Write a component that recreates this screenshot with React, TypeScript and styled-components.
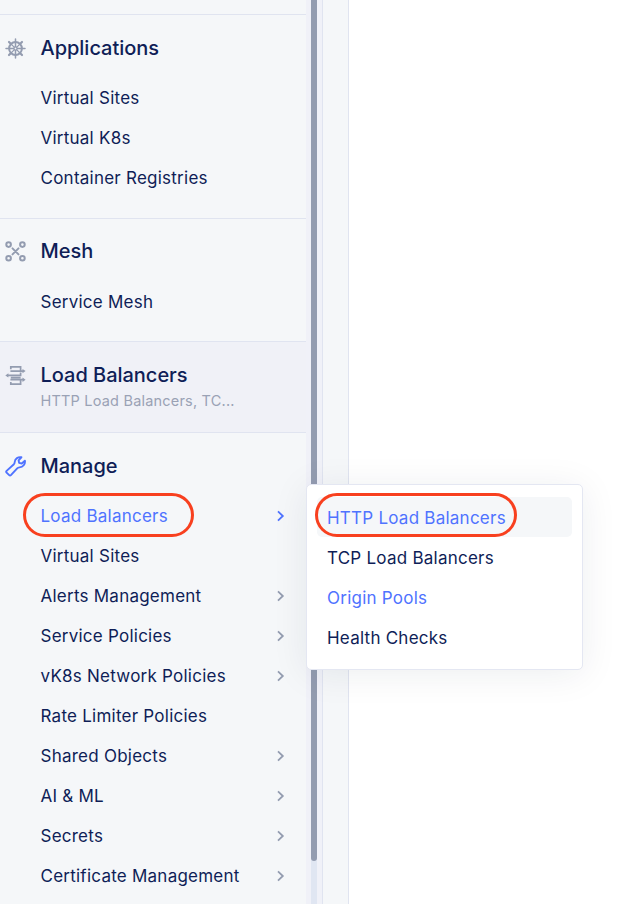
import React from "react";
import styled, { createGlobalStyle } from "styled-components";

const GlobalStyle = createGlobalStyle`
  * { box-sizing: border-box; }
  body {
    margin: 0;
    background: #fff;
    font-family: Inter, "Liberation Sans", sans-serif;
    color: #0f1e57;
  }
`;

const Page = styled.div`
  position: relative;
  display: flex;
  width: 620px;
  height: 904px;
  overflow: hidden;
  background: #fff;
`;

const Sidebar = styled.nav`
  width: 306px;
  height: 904px;
  padding-top: 14px;
  background: #f5f7f9;
  overflow: hidden;
`;

const ScrollTrack = styled.div`
  display: flex;
  justify-content: center;
  width: 17px;
  padding-right: 1px;
  background: #f0f1f8;
  border-right: 1px solid #e0e4f0;
`;

const ScrollRail = styled.div`
  width: 6px;
  margin-left: 1px;
  background: #e0e6f2;
`;

const ScrollThumb = styled.div`
  height: 861px;
  background: #939cb0;
  border-radius: 0 0 3px 3px;
`;

const Gutter = styled.div`
  width: 26px;
  background: #f5f7f9;
  border-right: 1px solid #e0e4f0;
`;

const Section = styled.section<{ $top: number; $bottom: number; $active?: boolean }>`
  padding: ${(p) => p.$top}px 0 ${(p) => p.$bottom}px;
  border-top: 1px solid #e0e4f0;
  background: ${(p) => (p.$active ? "#f0f1f7" : "transparent")};
`;

const Heading = styled.h2`
  display: flex;
  align-items: center;
  height: 30px;
  margin: 0;
  padding-left: 5px;
  font-size: 20px;
  font-weight: 500;
  letter-spacing: -0.02px;
  white-space: nowrap;

  svg {
    flex: none;
    width: 21px;
    height: 21px;
    margin-right: 14.5px;
  }
`;

const Summary = styled.div`
  padding-left: 40.5px;
  height: 21px;
  font-size: 14.5px;
  line-height: 21px;
  letter-spacing: 0.2px;
  color: #9aa2b5;
`;

const List = styled.ul<{ $gap: number }>`
  margin: ${(p) => p.$gap}px 0 0;
  padding: 0;
  list-style: none;
`;

const Item = styled.li<{ $active?: boolean }>`
  display: flex;
  align-items: center;
  justify-content: space-between;
  height: 40px;
  padding: 0 21px 0 40.5px;
  font-size: 17px;
  letter-spacing: 0.24px;
  white-space: nowrap;
  color: ${(p) => (p.$active ? "#4f73ff" : "#0f1e57")};

  svg {
    color: ${(p) => (p.$active ? "#4f73ff" : "#939cb0")};
  }
`;

const Flyout = styled.div`
  position: absolute;
  left: 306px;
  top: 484px;
  width: 277px;
  height: 186px;
  padding: 11.5px 10px;
  background: #fff;
  border: 1px solid #e4e7f2;
  border-radius: 5px;
  box-shadow: 0 4px 36px rgba(15, 40, 70, 0.08);
`;

const FlyoutItem = styled.div<{ $active?: boolean; $hover?: boolean }>`
  display: flex;
  align-items: center;
  height: 40px;
  padding: 2px 0 0 10px;
  border-radius: 5px;
  font-size: 17px;
  letter-spacing: 0.24px;
  white-space: nowrap;
  color: ${(p) => (p.$active ? "#4f73ff" : "#0f1e57")};
  background: ${(p) => (p.$hover ? "#f5f7f9" : "transparent")};
`;

const Callout = styled.div<{ $x: number; $y: number; $w: number; $h: number }>`
  position: absolute;
  left: ${(p) => p.$x}px;
  top: ${(p) => p.$y}px;
  width: ${(p) => p.$w}px;
  height: ${(p) => p.$h}px;
  border: 3px solid #f8401f;
  border-radius: 22px;
`;

const Chevron = () => (
  <svg width="9" height="12" viewBox="0 0 9 12" fill="none" stroke="currentColor" strokeWidth="1.8">
    <path d="M2 1.4 6.8 6 2 10.6" />
  </svg>
);

const HelmIcon = () => (
  <svg viewBox="0 0 21 21" fill="none" stroke="#939cb0" strokeWidth="1.5" strokeLinecap="round">
    <circle cx="10.5" cy="10.5" r="6.4" strokeWidth="2" />
    <circle cx="10.5" cy="10.5" r="1.6" strokeWidth="1.2" />
    <path d="M10.5 1v7.6M10.5 12.4V20M1 10.5h7.6M12.4 10.5H20" />
    <path d="m6 6 3.2 3.2M11.8 11.8 15 15M15 6l-3.2 3.2M9.2 11.8 6 15" strokeWidth="1.2" />
    <path d="m4 4 1.8 1.8M15.2 15.2 17 17M17 4l-1.8 1.8M5.8 15.2 4 17" strokeWidth="2.2" />
  </svg>
);

const MeshIcon = () => (
  <svg viewBox="0 0 21 21" fill="none" stroke="#939cb0" strokeWidth="2">
    <circle cx="3.6" cy="3.6" r="2.3" />
    <circle cx="17.4" cy="3.6" r="2.3" />
    <circle cx="3.6" cy="17.3" r="2.3" />
    <circle cx="17.4" cy="17.3" r="2.3" />
    <path d="m7.5 7.4 6 6M13.5 7.4l-6 6" strokeLinecap="round" />
  </svg>
);

const BalancerIcon = () => (
  <svg viewBox="0 0 21 21" fill="none" stroke="#939cb0" strokeWidth="1.7">
    <path d="M5.8 4.2V1.9h9.8v3.6M5.4 6.1h13M2.5 10.4h13.1V7.6M5.4 14.7h13M5.8 12.6h9.8M5.8 16.9v2.2h9.8v-3.6" />
    <path d="M17.5 3.9 20.6 6.1l-3.1 2.2zM3.4 8.2.3 10.4l3.1 2.2zM17.5 12.5l3.1 2.2-3.1 2.2z" fill="#939cb0" stroke="none" />
  </svg>
);

const WrenchIcon = () => (
  <svg viewBox="0 0 21 21" fill="none" stroke="#4f73ff" strokeWidth="1.9" strokeLinejoin="round">
    <path d="M16.4 1.3C13.2.6 10 2.7 9.7 6c-.1.9-.1 1.5-.8 2.2l-7.3 6.7c-.6.6-.6 1.1 0 1.7l2.6 2.6c.6.6 1.1.6 1.7 0l6.3-6.9c.7-.7 1.4-.8 2.3-.9 3.5-.3 6-3.2 5.4-6.8l-3.1 2.9-2.7-.6-.5-2.6z" />
  </svg>
);

type Entry = { label: string; more?: boolean; active?: boolean };

const manageEntries: Entry[] = [
  { label: "Load Balancers", more: true, active: true },
  { label: "Virtual Sites" },
  { label: "Alerts Management", more: true },
  { label: "Service Policies", more: true },
  { label: "vK8s Network Policies", more: true },
  { label: "Rate Limiter Policies" },
  { label: "Shared Objects", more: true },
  { label: "AI & ML", more: true },
  { label: "Secrets", more: true },
  { label: "Certificate Management", more: true },
];

const Entries = ({ entries, gap = 15 }: { entries: Entry[]; gap?: number }) => (
  <List $gap={gap}>
    {entries.map((e) => (
      <Item key={e.label} $active={e.active}>
        <span>{e.label}</span>
        {e.more && <Chevron />}
      </Item>
    ))}
  </List>
);

export default function App() {
  return (
    <>
      <GlobalStyle />
      <Page>
        <Sidebar>
          <Section $top={18} $bottom={20}>
            <Heading><HelmIcon />Applications</Heading>
            <Entries entries={[{ label: "Virtual Sites" }, { label: "Virtual K8s" }, { label: "Container Registries" }]} />
          </Section>
          <Section $top={17} $bottom={19}>
            <Heading><MeshIcon />Mesh</Heading>
            <Entries gap={16} entries={[{ label: "Service Mesh" }]} />
          </Section>
          <Section $top={18} $bottom={21} $active>
            <Heading><BalancerIcon />Load Balancers</Heading>
            <Summary>HTTP Load Balancers, TC...</Summary>
          </Section>
          <Section $top={18} $bottom={20}>
            <Heading><WrenchIcon />Manage</Heading>
            <Entries entries={manageEntries} />
          </Section>
        </Sidebar>
        <ScrollTrack>
          <ScrollRail><ScrollThumb /></ScrollRail>
        </ScrollTrack>
        <Gutter />
        <Flyout>
          <FlyoutItem $active $hover>HTTP Load Balancers</FlyoutItem>
          <FlyoutItem>TCP Load Balancers</FlyoutItem>
          <FlyoutItem $active>Origin Pools</FlyoutItem>
          <FlyoutItem>Health Checks</FlyoutItem>
        </Flyout>
        <Callout $x={23} $y={493} $w={171} $h={44} />
        <Callout $x={315} $y={493} $w={202} $h={44} />
      </Page>
    </>
  );
}
